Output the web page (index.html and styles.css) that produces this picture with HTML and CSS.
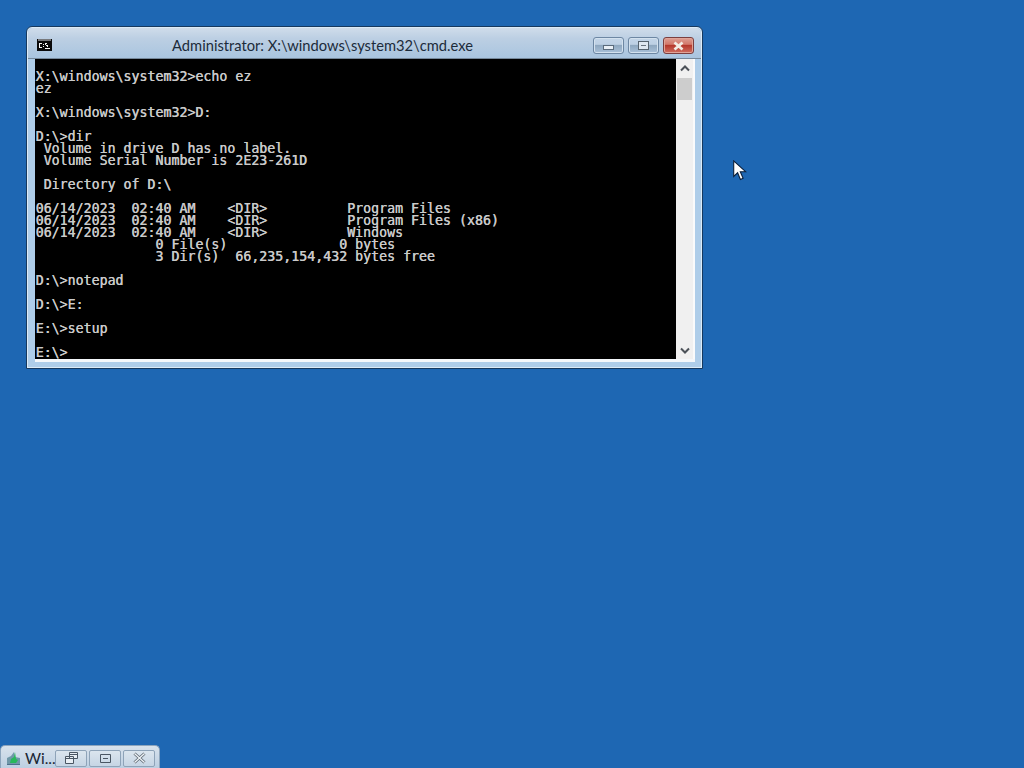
FILE: index.html
```html
<!DOCTYPE html>
<html lang="en">
<head>
<meta charset="utf-8">
<title>Administrator: X:\windows\system32\cmd.exe</title>
<link rel="stylesheet" href="styles.css">
</head>
<body>
<main class="desktop">
  <section class="window">
    <header class="titlebar">
      <svg class="app-icon" width="15" height="12" viewBox="0 0 15 12" aria-hidden="true">
        <rect width="15" height="12" fill="#0a0a0a"/>
        <rect x="1" y="0" width="13" height="2" fill="#77797c"/>
        <path d="M2 4h3v1H2zM2 5h1v3H2zM2 8h3v1H2zM6 5h1v1H6zM6 7h1v1H6zM8 4h2v1H8zM8 5h1v1H8zM9 6h2v1H9zM10 7h1v1h-1zM8 9h5v1H8z" fill="#f6f6f6"/>
      </svg>
      <h1 class="title">Administrator: X:\windows\system32\cmd.exe</h1>
      <div class="controls">
        <button class="ctl" type="button" aria-label="Minimize"><span class="min-glyph"></span></button>
        <button class="ctl" type="button" aria-label="Maximize"><span class="max-glyph"></span></button>
        <button class="ctl ctl-close" type="button" aria-label="Close">
          <svg width="13" height="10" viewBox="0 0 13 10" aria-hidden="true"><path d="M2.5 1.5l8 7M10.5 1.5l-8 7" stroke="#f3ece4" stroke-width="2.8" fill="none"/></svg>
        </button>
      </div>
    </header>
    <div class="client">
      <pre class="console">

X:\windows\system32&gt;echo ez
ez

X:\windows\system32&gt;D:

D:\&gt;dir
 Volume in drive D has no label.
 Volume Serial Number is 2E23-261D

 Directory of D:\

06/14/2023  02:40 AM    &lt;DIR&gt;          Program Files
06/14/2023  02:40 AM    &lt;DIR&gt;          Program Files (x86)
06/14/2023  02:40 AM    &lt;DIR&gt;          Windows
               0 File(s)              0 bytes
               3 Dir(s)  66,235,154,432 bytes free

D:\&gt;notepad

D:\&gt;E:

E:\&gt;setup

E:\&gt;</pre>
      <div class="scrollbar">
        <svg class="arrow" width="10" height="7" viewBox="0 0 10 7" aria-hidden="true"><path d="M1 5.5l4-4 4 4" stroke="#4b5158" stroke-width="2" fill="none"/></svg>
        <div class="thumb"></div>
        <div class="track"></div>
        <svg class="arrow" width="10" height="7" viewBox="0 0 10 7" aria-hidden="true"><path d="M1 1.5l4 4 4-4" stroke="#4b5158" stroke-width="2" fill="none"/></svg>
      </div>
    </div>
  </section>

  <svg class="cursor" width="14" height="21" viewBox="0 0 14 21" aria-hidden="true">
    <path d="M.7.9v15.6l3.9-3.7 2.8 6.6 2.7-1.2-2.8-6.5h5.3z" fill="#fff" stroke="#0b1f3a" stroke-width="1.1"/>
  </svg>

  <section class="mini">
    <svg class="mini-icon" width="14" height="14" viewBox="0 0 14 14" aria-hidden="true">
      <path d="M0 13V7l4-2 3-4 1 5 5 1v6z" fill="#6f97a8"/>
      <path d="M3 12l1-4 3-2 1-5 1 7 2 1-2 3z" fill="#27b85a"/>
      <path d="M0 13h13v1H0z" fill="#4d6f8c"/>
    </svg>
    <span class="mini-title">Wi...</span>
    <div class="mini-controls">
      <button class="mctl" type="button" aria-label="Restore">
        <svg width="15" height="14" viewBox="0 0 15 14" aria-hidden="true"><path d="M5.5 1.5h8v6h-8zM1.5 5.5h8v7h-8zM1.5 7.5h8M5.5 3.5h8" stroke="#4a5663" fill="#e8eef4"/></svg>
      </button>
      <button class="mctl" type="button" aria-label="Maximize">
        <svg width="13" height="11" viewBox="0 0 13 11" aria-hidden="true"><path d="M1.5 1.5h10v8h-10zM4 5.5h5" stroke="#4a5663" fill="none"/></svg>
      </button>
      <button class="mctl" type="button" aria-label="Close">
        <svg width="15" height="12" viewBox="0 0 15 12" aria-hidden="true"><path d="M2.5 1.5l10 9M12.5 1.5l-10 9" stroke="#5b6670" stroke-width="3" fill="none"/><path d="M2.5 1.5l10 9M12.5 1.5l-10 9" stroke="#eef2f6" stroke-width="1.4" fill="none"/></svg>
      </button>
    </div>
  </section>
</main>
</body>
</html>
```
FILE: styles.css
```css
* { box-sizing: border-box; }
html, body { margin: 0; height: 100%; }
body { overflow: hidden; background: #1e67b3; }

.desktop {
  position: relative;
  width: 1024px;
  height: 768px;
  background: #1e67b3;
  font-family: "Lato", "Open Sans", sans-serif;
}

.window {
  position: absolute;
  left: 26px;
  top: 26px;
  width: 677px;
  height: 343px;
  display: flex;
  flex-direction: column;
  background: #aecde9;
  border: 1px solid #16395f;
  border-radius: 6px 6px 0 0;
  box-shadow: inset 0 0 0 1px #dcebf7;
}

.titlebar {
  height: 31px;
  flex: none;
  display: flex;
  align-items: center;
  padding: 0 7px 0 9px;
  background: linear-gradient(#cfdcea 0, #bccfe3 35%, #a9c5df 100%);
  border-bottom: 1px solid #76889a;
  border-radius: 5px 5px 0 0;
  margin: 1px 1px 0;
}

.app-icon { flex: none; margin-bottom: -3px; }

.title {
  flex: 1;
  margin: 3px 0 0;
  font-size: 14.7px;
  font-weight: 400;
  color: #1c2b3a;
  text-align: center;
  white-space: nowrap;
}

.controls { display: flex; gap: 4px; align-self: flex-start; margin-top: 9px; }

.ctl {
  width: 31px;
  height: 17px;
  padding: 0;
  display: flex;
  align-items: center;
  justify-content: center;
  border: 1px solid #6d87a3;
  border-radius: 3px;
  background: linear-gradient(#c3d5e8 0, #bdd0e4 42%, #8fa8c0 50%, #a9c1d9 100%);
  box-shadow: inset 0 0 0 1px #d3e1ee;
}

.min-glyph {
  display: block;
  width: 11px;
  height: 5px;
  margin-top: 4px;
  background: #e8eff6;
  border: 1px solid #5a6b7c;
}

.max-glyph {
  display: block;
  width: 11px;
  height: 9px;
  border: 1px solid #56636f;
  background: linear-gradient(#6a7580, #6a7580) center / 5px 1px no-repeat, #dfe8f1;
}

.ctl-close {
  border-color: #7b3f3f;
  background: linear-gradient(#dd9f94 0, #d3796b 42%, #b5392d 50%, #cf6f60 100%);
  box-shadow: inset 0 0 0 1px #e0a498;
}

.client {
  display: flex;
  margin-left: 8px;
  border-bottom: 3px solid #f4f7fa;
  width: 660px;
  height: 303px;
}

.console {
  flex: none;
  width: 641px;
  height: 300px;
  margin: 0;
  padding: 0 0 0 .5px;
  background: #000;
  color: #cacaca;
  font-family: "DejaVu Sans Mono", monospace;
  font-size: 13.28px;
  line-height: 12px;
  text-shadow: .4px 0 0 #cacaca;
}

.scrollbar {
  flex: 1;
  height: 300px;
  display: flex;
  flex-direction: column;
  align-items: center;
  background: #f0f0f0;
  border-right: 2px solid #f9fafb;
  padding: 6px 0 5px;
}

.arrow { flex: none; }

.thumb {
  flex: none;
  width: 15px;
  height: 22px;
  margin-top: 6px;
  background: #cdcdcd;
}

.track { flex: 1; }

.cursor { position: absolute; left: 733px; top: 160px; }

.mini {
  position: absolute;
  left: 0;
  top: 745px;
  width: 160px;
  height: 23px;
  display: flex;
  align-items: center;
  padding: 2px 4px 0 6px;
  background: linear-gradient(#d8e2ec, #bccfe2);
  border: 1px solid #8da5bd;
  border-bottom: 0;
  border-radius: 5px 5px 0 0;
}

.mini-icon { flex: none; }

.mini-title {
  flex: 1;
  min-width: 0;
  margin-left: 4px;
  font-size: 15.5px;
  color: #1a2633;
  white-space: nowrap;
}

.mini-controls { display: flex; gap: 2px; }

.mctl {
  width: 32px;
  height: 17px;
  padding: 0;
  display: flex;
  align-items: center;
  justify-content: center;
  border: 1px solid #8ea3b8;
  border-radius: 2px;
  background: linear-gradient(#dbe5ee, #c6d5e4);
}
```
